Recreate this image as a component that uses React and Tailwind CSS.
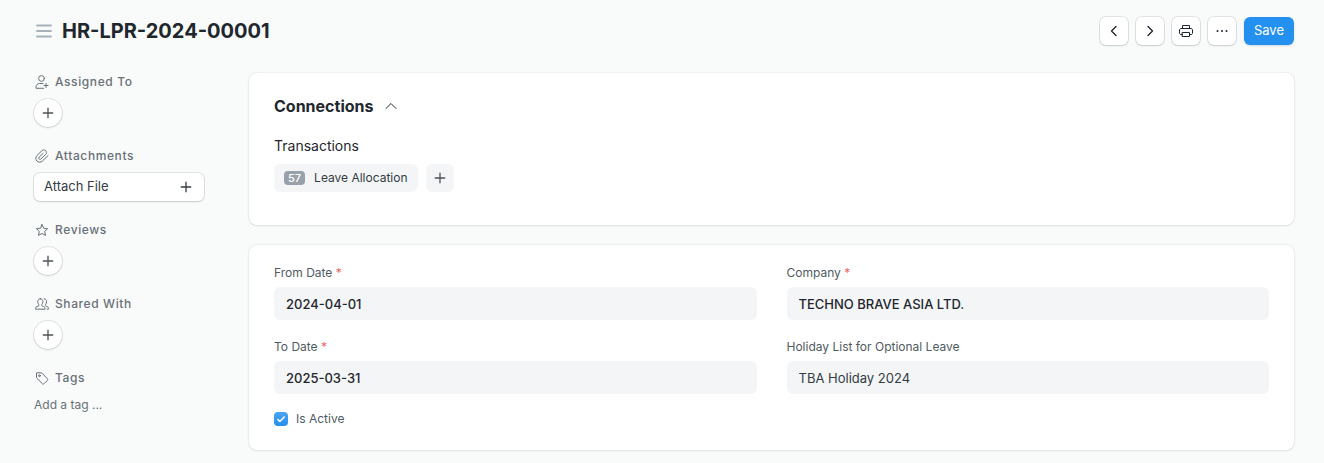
import { useState } from 'react'

const iconProps = {
  width: 16,
  height: 16,
  viewBox: '0 0 16 16',
  fill: 'none',
  stroke: 'currentColor',
  strokeLinecap: 'round',
  strokeLinejoin: 'round',
  'aria-hidden': true,
}

const PlusIcon = () => (
  <svg {...iconProps}>
    <path d="M8 3.25v9.5M3.25 8h9.5" strokeWidth="1.3" />
  </svg>
)

const AssignIcon = () => (
  <svg {...iconProps}>
    <circle cx="7.5" cy="4.5" r="2.9" />
    <path d="M9 9.500H5.500C3.600 9.500 2 11 2 13v1.300h7.500M12 9.500v4M10 11.500h4" />
  </svg>
)

const AttachIcon = () => (
  <svg {...iconProps}>
    <path d="M14 7.7l-5.5 5.3c-1.5 1.5-4.1 1.5-5.6 0-1.5-1.4-1.5-3.9 0-5.4l5-4.9c1-1 2.8-1 3.8 0s1 2.7 0 3.7l-4.8 4.6c-.5.5-1.3.5-1.8 0s-.5-1.3 0-1.8l4-3.8" />
  </svg>
)

const StarIcon = () => (
  <svg {...iconProps}>
    <path d="M8 2.6l1.7 3.6 3.9.5-2.9 2.7.8 4L8 11.5l-3.5 1.9.8-4-2.9-2.7 3.9-.5z" />
  </svg>
)

const UsersIcon = () => (
  <svg {...iconProps}>
    <path d="M6.300 2.800c1.600 0 2.600 1.200 2.600 2.800 0 1.200-.4 2.200-1.100 2.900v.9c0 .4.300.7.700.8l1.300.4c.8.300 1.300 1 1.300 2v.6H1.500v-.6c0-1 .5-1.700 1.300-2l1.300-.4c.4-.1.700-.4.700-.8v-.9c-.7-.7-1.100-1.700-1.100-2.900 0-1.600 1-2.800 2.600-2.800z" />
    <path d="M10.200 2.800c1.500.1 2.400 1.300 2.400 2.800 0 1.200-.4 2.200-1.100 2.900v.9c0 .4.300.7.700.8l1 .4c.8.300 1.300 1 1.300 2v.6h-1.300" />
  </svg>
)

const TagIcon = () => (
  <svg {...iconProps}>
    <path d="M2.500 3.300v4.100c0 .3.100.6.300.8l5.600 5.500c.5.500 1.200.5 1.700 0l3.300-3.300c.5-.5.500-1.200 0-1.700L7.900 3.100c-.2-.2-.5-.3-.8-.3H3c-.3 0-.5.200-.5.500z" />
    <circle cx="5.4" cy="5.7" r="0.9" />
  </svg>
)

const PrinterIcon = () => (
  <svg {...iconProps}>
    <path d="M4.500 5.500v-3h7v3M4.500 11.500H3c-.8 0-1.500-.6-1.500-1.400V7c0-.8.700-1.500 1.500-1.500h10c.8 0 1.500.7 1.500 1.500v3.100c0 .8-.7 1.400-1.500 1.400h-1.500" />
    <path d="M4.500 9.500h7v4h-7z" />
  </svg>
)

const DotsIcon = () => (
  <svg {...iconProps} fill="currentColor" stroke="none">
    <circle cx="3.5" cy="8" r="1" />
    <circle cx="8" cy="8" r="1" />
    <circle cx="12.5" cy="8" r="1" />
  </svg>
)

const raised = 'bg-white shadow-[0_0_0_1px_rgba(25,39,52,0.1),0_1px_2px_rgba(25,39,52,0.12)]'

function IconButton({ label, children }) {
  return (
    <button type="button" aria-label={label} className={`flex size-7 items-center justify-center rounded-md ${raised}`}>
      {children}
    </button>
  )
}

function RoundAdd({ label }) {
  return (
    <button type="button" aria-label={label} className={`flex size-7 items-center justify-center rounded-full text-[#4c5258] ${raised}`}>
      <PlusIcon />
    </button>
  )
}

function SidebarSection({ icon, title, children }) {
  return (
    <section className="flex flex-col items-start gap-2">
      <h2 className="flex h-[18px] items-center gap-[5px] text-xs font-medium tracking-wider text-[#687178]">
        {icon}
        {title}
      </h2>
      {children}
    </section>
  )
}

function Card({ className, children }) {
  return (
    <section className={`rounded-lg bg-white px-[25px] shadow-[0_0_2px_rgba(25,39,52,0.16),0_1px_2px_rgba(25,39,52,0.08)] ${className}`}>
      {children}
    </section>
  )
}

function Field({ id, label, required, value }) {
  const [text, setText] = useState(value)
  return (
    <div className="flex flex-col gap-[5px]">
      <label htmlFor={id} className="h-[18px] text-xs leading-[18px] text-[#505a62]">
        {label}
        {required && <span className="text-[#f0626c]"> *</span>}
      </label>
      <input
        id={id}
        type="text"
        value={text}
        onChange={e => setText(e.target.value)}
        className={`h-[33px] w-full rounded-md bg-[#f4f5f6] px-3 text-[13px] outline-none ${required ? 'font-medium text-[#1f272e]' : 'text-[#333c44]'}`}
      />
    </div>
  )
}

export default function App() {
  const [open, setOpen] = useState(true)
  const [active, setActive] = useState(true)

  return (
    <div className="min-h-screen bg-[#f9fafa] pt-[17px] pr-[30px] pb-3 pl-[34px] font-['Inter','Liberation_Sans',sans-serif] text-[#1f272e]">
      <header className="mb-7 flex h-7 items-center justify-between">
        <div className="flex items-center gap-2">
          <button type="button" aria-label="Toggle sidebar" className="text-[#a6b1b9]">
            <svg {...iconProps} width="20" height="20" viewBox="0 0 20 20">
              <path d="M3 4.500h14M3 10h14M3 15.500h14" strokeWidth="1.8" />
            </svg>
          </button>
          <h1 className="text-xl font-bold">HR-LPR-2024-00001</h1>
        </div>
        <div className="flex items-center gap-2">
          <IconButton label="Previous">
            <svg {...iconProps}><path d="M10 3.500L5.500 8l4.500 4.500" strokeWidth="1.4" /></svg>
          </IconButton>
          <IconButton label="Next">
            <svg {...iconProps}><path d="M6 3.500L10.500 8 6 12.500" strokeWidth="1.4" /></svg>
          </IconButton>
          <IconButton label="Print"><PrinterIcon /></IconButton>
          <IconButton label="More"><DotsIcon /></IconButton>
          <button type="button" className="h-7 rounded-md bg-[#2490ef] px-[10px] text-[13px] text-white shadow-[0_1px_2px_rgba(25,39,52,0.16)]">
            Save
          </button>
        </div>
      </header>

      <div className="flex items-start gap-[45px]">
        <aside className="flex w-[170px] shrink-0 flex-col gap-5">
          <SidebarSection icon={<AssignIcon />} title="Assigned To">
            <RoundAdd label="Assign" />
          </SidebarSection>
          <SidebarSection icon={<AttachIcon />} title="Attachments">
            <button type="button" className={`flex h-7 w-full items-center justify-between rounded-md px-[10px] text-[13px] text-[#333c44] ${raised}`}>
              Attach File
              <PlusIcon />
            </button>
          </SidebarSection>
          <SidebarSection icon={<StarIcon />} title="Reviews">
            <RoundAdd label="Add review" />
          </SidebarSection>
          <SidebarSection icon={<UsersIcon />} title="Shared With">
            <RoundAdd label="Share" />
          </SidebarSection>
          <SidebarSection icon={<TagIcon />} title="Tags">
            <button type="button" className="text-xs leading-5 text-[#687178]">Add a tag ...</button>
          </SidebarSection>
        </aside>

        <main className="flex min-w-0 flex-1 flex-col gap-5">
          <Card className="pt-[22px] pb-[33px]">
            <button
              type="button"
              aria-expanded={open}
              onClick={() => setOpen(!open)}
              className="flex h-[22px] items-center gap-[10px] text-base font-bold"
            >
              Connections
              <svg {...iconProps} className={open ? '' : 'rotate-180'}>
                <path d="M3 10.500l5-5 5 5" />
              </svg>
            </button>
            {open && (
              <div className="mt-5">
                <h3 className="text-sm leading-[18px]">Transactions</h3>
                <div className="mt-[9px] flex gap-2">
                  <a href="#leave-allocation" className="flex h-7 items-center gap-[9px] rounded-md bg-[#f4f5f6] px-[10px] text-xs text-[#333c44]">
                    <span className="rounded bg-[#98a1a9] px-1 text-[11px] leading-[14px] font-medium text-white">57</span>
                    Leave Allocation
                  </a>
                  <button type="button" aria-label="New Leave Allocation" className="flex size-7 items-center justify-center rounded-md bg-[#f4f5f6] text-[#4c5258]">
                    <PlusIcon />
                  </button>
                </div>
              </div>
            )}
          </Card>

          <Card className="pt-[19px] pb-[22px]">
            <form onSubmit={e => e.preventDefault()}>
              <div className="grid grid-cols-2 gap-x-[30px] gap-y-[18px]">
                <Field id="from-date" label="From Date" required value="2024-04-01" />
                <Field id="company" label="Company" required value="TECHNO BRAVE ASIA LTD." />
                <Field id="to-date" label="To Date" required value="2025-03-31" />
                <Field id="holiday-list" label="Holiday List for Optional Leave" value="TBA Holiday 2024" />
              </div>
              <label className="mt-4 flex h-[18px] w-fit items-center gap-2 text-xs text-[#505a62]">
                <span className="grid">
                  <input
                    type="checkbox"
                    checked={active}
                    onChange={e => setActive(e.target.checked)}
                    className="peer col-start-1 row-start-1 size-[14px] appearance-none rounded border border-[#c0c6cc] checked:border-0 checked:bg-linear-to-b checked:from-[#4aa3f3] checked:to-[#2490ef]"
                  />
                  <svg {...iconProps} width="14" height="14" viewBox="0 0 14 14" className="pointer-events-none invisible col-start-1 row-start-1 text-white peer-checked:visible">
                    <path d="M3.800 7.500l2 2 4.400-4.600" strokeWidth="1.5" />
                  </svg>
                </span>
                Is Active
              </label>
            </form>
          </Card>
        </main>
      </div>
    </div>
  )
}
